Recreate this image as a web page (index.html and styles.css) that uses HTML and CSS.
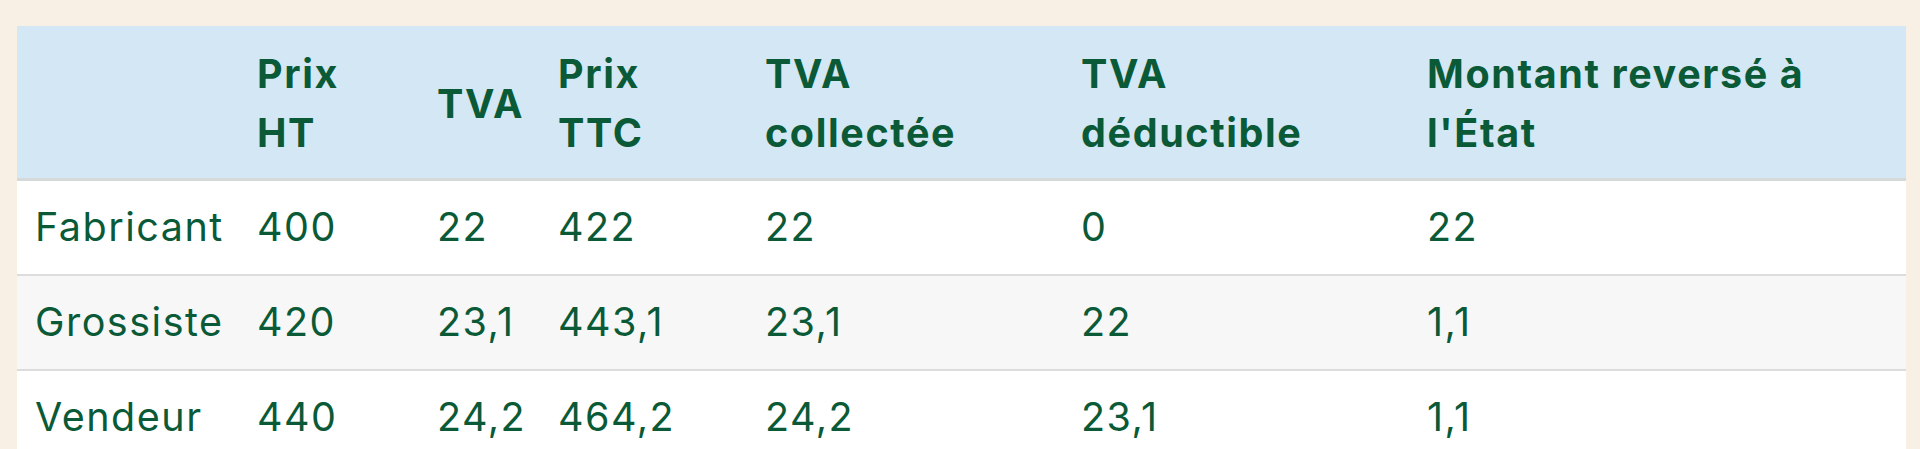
FILE: index.html
```html
<!DOCTYPE html>
<html lang="fr">
<head>
<meta charset="utf-8">
<title>TVA</title>
<link rel="stylesheet" href="styles.css">
</head>
<body>
<div class="page">
  <table class="vat-table">
    <colgroup>
      <col class="c-actor">
      <col class="c-ht">
      <col class="c-tva">
      <col class="c-ttc">
      <col class="c-coll">
      <col class="c-ded">
      <col class="c-rev">
    </colgroup>
    <thead>
      <tr>
        <th></th>
        <th>Prix HT</th>
        <th>TVA</th>
        <th>Prix TTC</th>
        <th>TVA collectée</th>
        <th>TVA déductible</th>
        <th>Montant reversé à l'État</th>
      </tr>
    </thead>
    <tbody>
      <tr>
        <td>Fabricant</td><td>400</td><td>22</td><td>422</td><td>22</td><td>0</td><td>22</td>
      </tr>
      <tr>
        <td>Grossiste</td><td>420</td><td>23,1</td><td>443,1</td><td>23,1</td><td>22</td><td>1,1</td>
      </tr>
      <tr>
        <td>Vendeur</td><td>440</td><td>24,2</td><td>464,2</td><td>24,2</td><td>23,1</td><td>1,1</td>
      </tr>
    </tbody>
  </table>
</div>
</body>
</html>
```

FILE: styles.css
```css
html, body {
  margin: 0;
  padding: 0;
  background: #f8efe5;
}

.page {
  padding: 26px 14px 0 17px;
}

.vat-table {
  width: 100%;
  table-layout: fixed;
  border-collapse: collapse;
  font-family: "Inter", "Liberation Sans", sans-serif;
  font-size: 39.5px;
  line-height: 59px;
  letter-spacing: 1.5px;
  color: #0b5a37;
}

.c-actor { width: 222px; }
.c-ht { width: 180px; }
.c-tva { width: 121px; }
.c-ttc { width: 207px; }
.c-coll { width: 316px; }
.c-ded { width: 346px; }
.c-rev { width: auto; }

.vat-table th,
.vat-table td {
  padding: 17px 18px;
  text-align: left;
  vertical-align: middle;
}

.vat-table thead th {
  background: #d3e8f4;
  font-weight: 700;
  letter-spacing: 1.6px;
  padding: 19px 12px 15px 18px;
  border-bottom: 3px solid #d6d9da;
}

.vat-table tbody td {
  font-weight: 400;
  border-bottom: 2px solid #dcdcdc;
}

.vat-table tbody tr:nth-child(odd) td {
  background: #ffffff;
}

.vat-table tbody tr:nth-child(even) td {
  background: #f7f7f7;
}
```
